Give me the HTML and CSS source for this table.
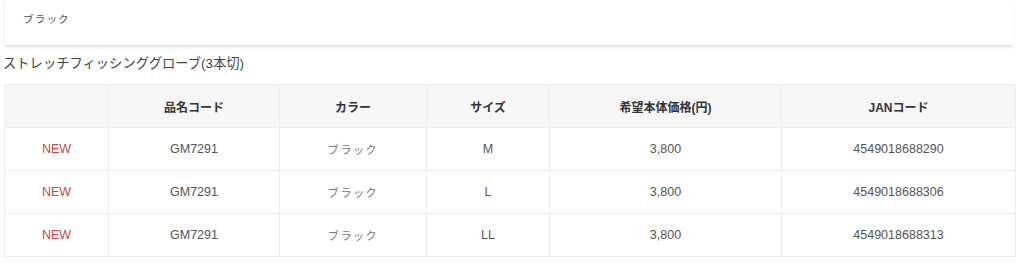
FILE: index.html
```html
<!DOCTYPE html>
<html lang="ja">
<head>
<meta charset="utf-8">
<link rel="stylesheet" href="styles.css">
</head>
<body>
<div class="card">
  <span class="color-name">ブラック</span>
</div>
<h2 class="title">ストレッチフィッシンググローブ(3本切)</h2>
<table class="spec">
  <colgroup>
    <col class="c1"><col class="c2"><col class="c3"><col class="c4"><col class="c5"><col class="c6">
  </colgroup>
  <thead>
    <tr><th></th><th>品名コード</th><th>カラー</th><th>サイズ</th><th>希望本体価格(円)</th><th>JANコード</th></tr>
  </thead>
  <tbody>
    <tr><td class="new">NEW</td><td>GM7291</td><td class="kana">ブラック</td><td>M</td><td>3,800</td><td>4549018688290</td></tr>
    <tr><td class="new">NEW</td><td>GM7291</td><td class="kana">ブラック</td><td>L</td><td>3,800</td><td>4549018688306</td></tr>
    <tr><td class="new">NEW</td><td>GM7291</td><td class="kana">ブラック</td><td>LL</td><td>3,800</td><td>4549018688313</td></tr>
  </tbody>
</table>
</body>
</html>
```

FILE: styles.css
```css
* { box-sizing: border-box; }
html, body { margin: 0; padding: 0; background: #fff; }
body {
  font-family: "Liberation Sans", "Noto Sans CJK JP", sans-serif;
  color: #444;
  width: 1024px;
  height: 276px;
  overflow: hidden;
}
.card {
  margin: 0 10px 0 4px;
  height: 45px;
  padding: 10px 0 0 18px;
  line-height: 16px;
  border-left: 1px solid #f2f2f2;
  box-shadow: 0 3px 3px -1px rgba(0,0,0,0.13);
}
.color-name {
  font-size: 10.5px;
  letter-spacing: 1.2px;
  color: #555;
  line-height: 16px;
}
.title {
  margin: 9px 0 0 3px;
  font-size: 13.3px;
  font-weight: normal;
  color: #444;
  line-height: 20px;
  height: 30px;
}
.spec {
  margin-left: 4px;
  width: 1011px;
  border-collapse: collapse;
  table-layout: fixed;
  font-size: 12.5px;
}
.c1 { width: 104px; }
.c2 { width: 171px; }
.c3 { width: 147px; }
.c4 { width: 123px; }
.c5 { width: 232px; }
.c6 { width: 234px; }
.spec th, .spec td {
  border: 1px solid #ececec;
  height: 43px;
  text-align: center;
  vertical-align: middle;
  padding: 0;
}
.spec th {
  background: #f6f6f6;
  font-weight: bold;
  color: #333;
  font-size: 12px;
}
.spec td { color: #555; }
.spec td.new { color: #c8473f; }
.spec td.kana { letter-spacing: 1.6px; color: #777; font-size: 11px; }
```
